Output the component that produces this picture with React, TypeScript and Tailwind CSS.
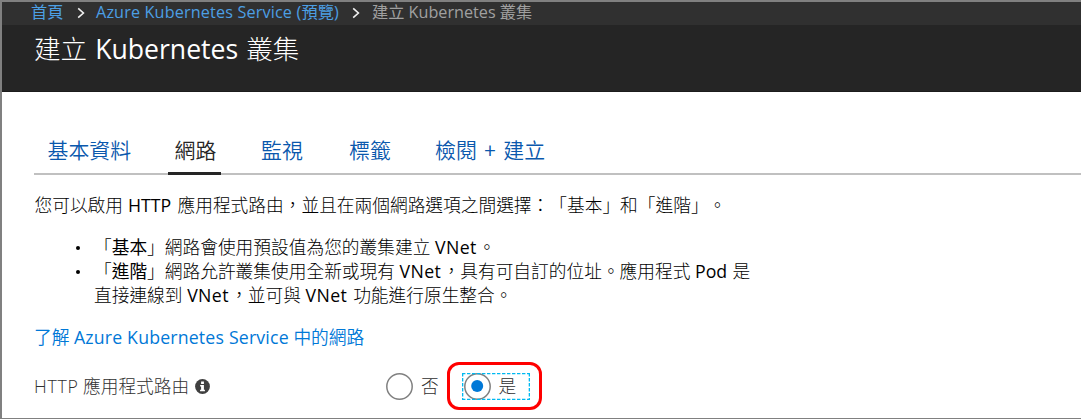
import type { ReactNode } from "react";

const tabs: { label: ReactNode; pad: string; active?: boolean }[] = [
  { label: "基本資料", pad: "pl-[13.5px] w-[134px]" },
  { label: "網路", pad: "w-[53px] pl-[6.5px]", active: true },
  { label: "監視", pad: "pl-[40px] w-[128px]" },
  { label: "標籤", pad: "pl-0 w-[86px]" },
  {
    label: (
      <>
        檢閱<Latin className="w-[26.5px] text-center font-normal">+</Latin>建立
      </>
    ),
    pad: "pl-0 w-[140px]",
  },
];

function Chevron({ className }: { className: string }) {
  return (
    <svg viewBox="0 0 8 12" className={`mb-px h-3 w-2 shrink-0 ${className}`} fill="none" stroke="#f0f0f0" strokeWidth="1.6">
      <path d="M1.2 1.4 6.4 6 1.2 10.6" />
    </svg>
  );
}

function Latin({ className, children }: { className: string; children: ReactNode }) {
  return <span className={`inline-block whitespace-pre ${className}`}>{children}</span>;
}

function Bullet() {
  return (
    <span className="flex h-6 w-[60px] items-center pt-px pl-[42px]">
      <span className="size-1 rounded-full bg-black" />
    </span>
  );
}

function VNet() {
  return <Latin className="w-[43px] font-normal tracking-[0.4px]">VNet</Latin>;
}

function Radio({ checked }: { checked?: boolean }) {
  return (
    <svg viewBox="0 0 27 27" className="size-[27px] shrink-0">
      <circle cx="13.5" cy="13.5" r="12.7" fill="white" stroke="#808080" strokeWidth="1.5" />
      {checked && <circle cx="13.2" cy="13" r="6" fill="#0078d7" />}
    </svg>
  );
}

export default function App() {
  return (
    <div className="h-[419px] w-[1081px] overflow-hidden border-t-2 border-b border-l-2 border-[#808080] bg-white font-['Open_Sans','Noto_Sans_CJK_TC',sans-serif] font-light text-black [text-spacing-trim:space-all]">
      <nav className="flex h-[23px] items-center bg-[#303030] pl-[29px] text-[16.2px] leading-[23px] font-normal whitespace-pre text-[#4c9fe4]">
        <span className="w-[46px] pb-[2px]">首頁</span>
        <Chevron className="mr-[11px]" />
        <span className="w-[256px] pb-[2px] tracking-[0.15px]">Azure Kubernetes Service (預覽)</span>
        <Chevron className="mr-[12px]" />
        <span className="pb-[2px] text-[#a0a0a0]">建立 Kubernetes 叢集</span>
      </nav>
      <header className="h-[67px] border-b border-[#1c1c1c] bg-[#252525] pl-[32px]">
        <h1 className="pt-[3px] text-[26.6px] leading-[42px] whitespace-pre text-white">
          建立<Latin className="w-[159px] pl-[8px] font-normal">Kubernetes</Latin>叢集
        </h1>
      </header>
      <main className="pl-[32px]">
        <div className="flex h-[83px] items-end border-b-2 border-[#c0c0c0] text-[20.9px] leading-[34px] font-[350] whitespace-pre text-[#0a58ad]">
          {tabs.map((t, i) => (
            <div
              key={i}
              className={`shrink-0 ${t.pad} ${t.active ? "-mb-[2px] h-[42px] border-b-[3px] border-[#252525] text-[#252525]" : "h-[40px]"}`}
            >
              {t.label}
            </div>
          ))}
        </div>
        <p className="mt-[17px] h-[26px] pl-[0.5px] text-[17.72px] leading-[26px] whitespace-pre">
          您可以啟用<Latin className="w-[54.5px] pl-[5px] font-normal">HTTP</Latin>應用程式路由，並且在兩個網路選項之間選擇：「基本」和「進階」。
        </p>
        <ul className="mt-[17px] list-none text-[17.72px] leading-6 whitespace-pre">
          <li className="flex h-6">
            <Bullet />
            <span>
              「<b>基本</b>」網路會使用預設值為您的叢集建立 <VNet />。
            </span>
          </li>
          <li className="flex h-12">
            <Bullet />
            <span>
              「<b>進階</b>」網路允許叢集使用全新或現有 <VNet />，具有可自訂的位址。應用程式 <Latin className="w-[37.5px] font-normal">Pod</Latin>是
              <br />
              直接連線到 <VNet />，並可與 <VNet /> 功能進行原生整合。
            </span>
          </li>
        </ul>
        <a className="mt-[17px] block h-[26px] text-[17.72px] leading-[26px] font-[350] whitespace-pre text-[#0078d7]">
          了解<Latin className="w-[224px] pl-[4.5px] font-normal tracking-[0.18px]">Azure Kubernetes Service</Latin>中的網路
        </a>
        <div className="mt-[12px] flex h-[48px] items-center text-[17.72px] text-[#303030]">
          <span className="w-[161px] whitespace-pre">
            <Latin className="w-[49px] tracking-[0.7px]">HTTP</Latin>應用程式路由
          </span>
          <svg viewBox="0 0 16 16" className="size-[15px]">
            <circle cx="8" cy="8" r="7.9" fill="#404040" />
            <path d="M6.5 2.6h3v2.6h-3zM5.5 6.5h4v5h1.1v1.5H5.4v-1.5h1.1V8h-1z" fill="white" />
          </svg>
          <div className="ml-[176px] flex items-center">
            <Radio />
            <span className="w-[34px] pl-[8px]">否</span>
          </div>
          <div className="flex h-[48px] w-[95px] items-center rounded-xl border-3 border-[#ff0000] pl-[12px]">
            <div className="relative flex h-[27px] w-[68px] items-center pl-[2px]">
              <svg viewBox="0 0 68 27" className="absolute inset-0 h-[27px] w-[68px]" fill="none" stroke="#00b9f1" strokeWidth="1.3" strokeDasharray="3.4 1.6">
                <path d="M0 .65H68M0 26.35H68M.65 0V27M67.35 0V27" />
              </svg>
              <Radio checked />
              <span className="pl-[7.5px]">是</span>
            </div>
          </div>
        </div>
      </main>
    </div>
  );
}
